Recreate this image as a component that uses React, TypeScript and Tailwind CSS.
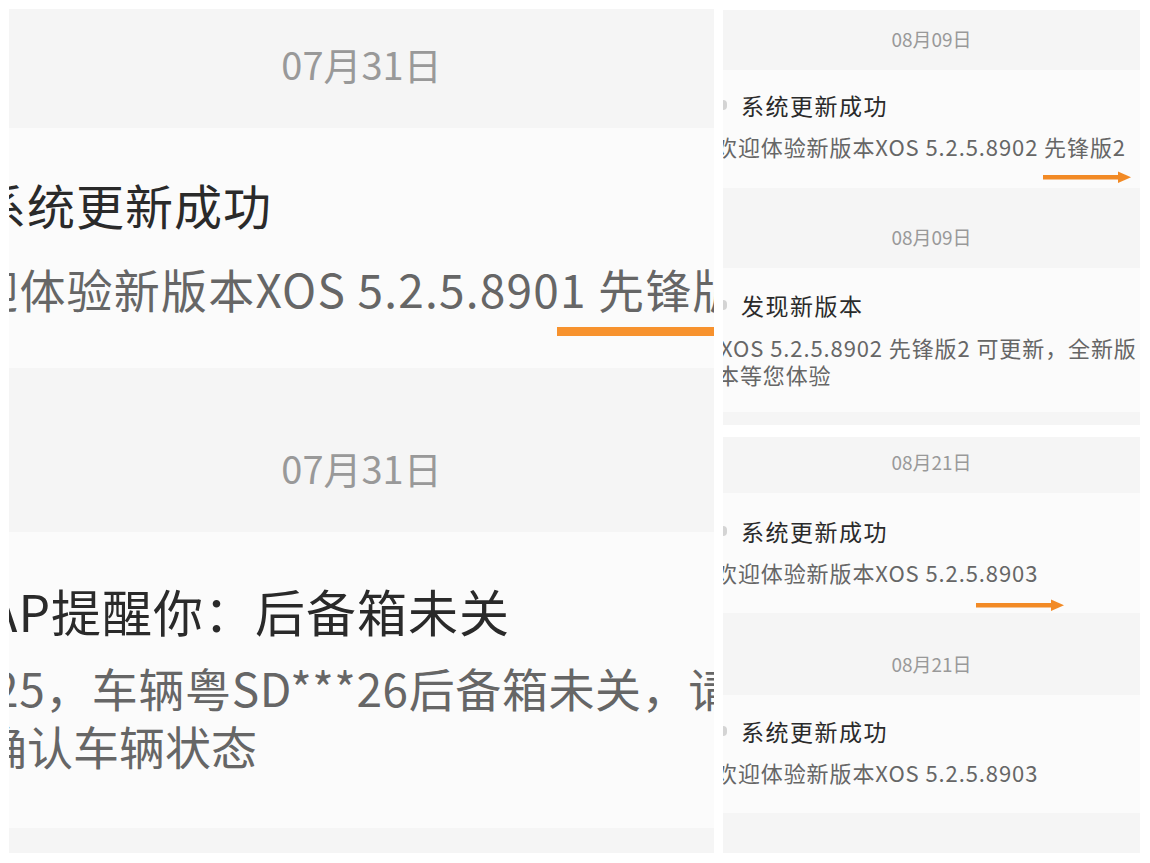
import React from 'react';

const FONT = "font-['Noto_Sans_CJK_SC','Noto_Sans',sans-serif]";

function Bar({ className = '' }: { className?: string }) {
  return <div className={`h-[9px] bg-[#f7922e] ${className}`} />;
}

function Arrow() {
  return (
    <svg width="88" height="12" viewBox="0 0 88 12">
      <rect x="0" y="4" width="77" height="4.5" fill="#f28a25" />
      <polygon points="75,0.5 88,6.2 75,12" fill="#f28a25" />
    </svg>
  );
}

function Dot() {
  return <span className="absolute left-0 top-1/2 -translate-y-1/2 w-[4px] h-[10px] rounded-r-full bg-[#d4d4d4]" />;
}

function BigDate({ h, text }: { h: string; text: string }) {
  return (
    <div className={`${h} bg-[#f5f5f5] flex items-end justify-center pb-[44px] text-[38px] leading-[40px] text-[#999]`}>{text}</div>
  );
}

function SmallDate({ h, text }: { h: string; text: string }) {
  return (
    <div className={`${h} bg-[#f5f5f5] flex items-end justify-center pb-[21px] text-[19px] leading-[20px] text-[#999]`}>{text}</div>
  );
}

export default function App() {
  return (
    <div className={`w-[1150px] h-[863px] bg-white flex ${FONT}`}>
      {/* left: zoomed crop */}
      <div className="ml-[9px] mt-[9px] w-[705px] flex flex-col overflow-hidden">
        <BigDate h="h-[119px]" text="07月31日" />
        <div className="h-[240px] bg-[#fbfbfb] flex flex-col">
          <div className="mt-[48px] ml-[-31px] whitespace-nowrap text-[48px] tracking-[1px] leading-[56px] text-[#2a2a2a]">系统更新成功</div>
          <div className="mt-[29px] ml-[-84px] whitespace-nowrap text-[46px] tracking-[1.2px] leading-[54px] text-[#666]">欢迎体验新版本XOS 5.2.5.8901 先锋版2</div>
          <div className="mt-[12px] flex justify-end"><Bar className="w-[157px]" /></div>
        </div>
        <BigDate h="h-[164px]" text="07月31日" />
        <div className="h-[296px] bg-[#fbfbfb] flex flex-col">
          <div className="mt-[49px] ml-[-22px] whitespace-nowrap text-[50px] tracking-[1px] leading-[58px] text-[#2a2a2a]">AP提醒你：后备箱未关</div>
          <div className="mt-[19px] ml-[-16px] whitespace-nowrap text-[46px] tracking-[0.6px] leading-[58px] text-[#666]">25，车辆粤SD***26后备箱未关，请</div>
          <div className="ml-[-28px] whitespace-nowrap text-[46px] leading-[58px] text-[#666]">确认车辆状态</div>
        </div>
        <div className="h-[25px] bg-[#f5f5f5]" />
      </div>

      {/* right: normal scale */}
      <div className="ml-[9px] mt-[10px] w-[417px] flex flex-col overflow-hidden">
        <SmallDate h="h-[60px]" text="08月09日" />
        <div className="h-[118px] bg-[#fbfbfb] flex flex-col">
          <div className="relative mt-[21px] pl-[18px] whitespace-nowrap text-[23px] tracking-[1.5px] leading-[28px] text-[#2a2a2a]"><Dot />系统更新成功</div>
          <div className="mt-[13px] ml-[-8px] whitespace-nowrap text-[22px] tracking-[0.9px] leading-[28px] text-[#666]">欢迎体验新版本XOS 5.2.5.8902 先锋版2</div>
          <div className="mt-[11px] flex justify-end pr-[9px]"><Arrow /></div>
        </div>
        <SmallDate h="h-[80px]" text="08月09日" />
        <div className="h-[144px] bg-[#fbfbfb] flex flex-col">
          <div className="relative mt-[23px] pl-[18px] whitespace-nowrap text-[23px] tracking-[1.5px] leading-[28px] text-[#2a2a2a]"><Dot />发现新版本</div>
          <div className="mt-[15px] ml-[-3px] whitespace-nowrap text-[22px] tracking-[0.9px] leading-[27px] text-[#666]">XOS 5.2.5.8902 先锋版2 可更新，全新版</div>
          <div className="ml-[-6px] whitespace-nowrap text-[22px] tracking-[0.9px] leading-[27px] text-[#666]">本等您体验</div>
        </div>
        <div className="h-[13px] bg-[#f5f5f5]" />
        <div className="h-[12px] bg-white" />
        <SmallDate h="h-[56px]" text="08月21日" />
        <div className="h-[120px] bg-[#fbfbfb] flex flex-col">
          <div className="relative mt-[24px] pl-[18px] whitespace-nowrap text-[23px] tracking-[1.5px] leading-[28px] text-[#2a2a2a]"><Dot />系统更新成功</div>
          <div className="mt-[13px] ml-[-8px] whitespace-nowrap text-[22px] tracking-[0.9px] leading-[28px] text-[#666]">欢迎体验新版本XOS 5.2.5.8903</div>
          <div className="mt-[13px] pl-[253px]"><Arrow /></div>
        </div>
        <SmallDate h="h-[82px]" text="08月21日" />
        <div className="h-[118px] bg-[#fbfbfb] flex flex-col">
          <div className="relative mt-[22px] pl-[18px] whitespace-nowrap text-[23px] tracking-[1.5px] leading-[28px] text-[#2a2a2a]"><Dot />系统更新成功</div>
          <div className="mt-[13px] ml-[-8px] whitespace-nowrap text-[22px] tracking-[0.9px] leading-[28px] text-[#666]">欢迎体验新版本XOS 5.2.5.8903</div>
        </div>
        <div className="h-[40px] bg-[#f5f5f5]" />
      </div>
    </div>
  );
}
